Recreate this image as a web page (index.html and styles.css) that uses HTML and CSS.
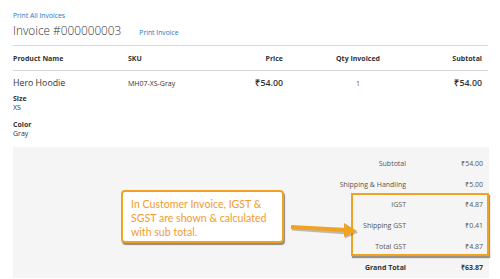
FILE: index.html
```html
<!DOCTYPE html>
<html lang="en">
<head>
  <meta charset="UTF-8" />
  <title>Invoice #000000003</title>
  <link rel="stylesheet" href="styles.css">
</head>
<body>
  <div class="page">
    <a class="link all-link" href="#">Print All Invoices</a>
    <div class="title-row">
      <h1 class="title">Invoice #000000003</h1>
      <a class="link" href="#">Print Invoice</a>
    </div>

    <div class="items">
      <div class="row head">
        <div>Product Name</div>
        <div>SKU</div>
        <div class="r">Price</div>
        <div class="c">Qty Invoiced</div>
        <div class="r">Subtotal</div>
      </div>
      <div class="row item">
        <div>
          <div class="name">Hero Hoodie</div>
          <dl class="opts">
            <dt>Size</dt>
            <dd>XS</dd>
            <dt>Color</dt>
            <dd>Gray</dd>
          </dl>
        </div>
        <div class="sku">MH07-XS-Gray</div>
        <div class="r price">₹54.00</div>
        <div class="c qty">1</div>
        <div class="r price">₹54.00</div>
      </div>
    </div>

    <div class="totals">
      <div class="trow"><span>Subtotal</span><span>₹54.00</span></div>
      <div class="trow"><span>Shipping &amp; Handling</span><span>₹5.00</span></div>
      <div class="trow"><span>IGST</span><span>₹4.87</span></div>
      <div class="trow"><span>Shipping GST</span><span>₹0.41</span></div>
      <div class="trow"><span>Total GST</span><span>₹4.87</span></div>
      <div class="trow grand"><span>Grand Total</span><span>₹63.87</span></div>

      <div class="gst-frame"></div>
      <div class="callout">In Customer Invoice, IGST &amp; SGST are shown &amp; calculated with sub total.</div>
      <svg class="arrow" width="70" height="20" viewBox="0 0 70 20">
        <line x1="0" y1="7" x2="56" y2="11" stroke="#5a4a30" stroke-width="4" opacity="0.35" transform="translate(1,1.5)"/>
        <polygon points="53,3 66,11 53,17" fill="#5a4a30" opacity="0.35" transform="translate(1,1.5)"/>
        <line x1="0" y1="7" x2="56" y2="10" stroke="#f0a222" stroke-width="4"/>
        <polygon points="53,3 66,11 53,17" fill="#f0a222"/>
      </svg>
    </div>
  </div>
</body>
</html>
```

FILE: styles.css
```css
body { margin: 0; font-family: "Open Sans", sans-serif; color: #333; background: #fff; }
.page { padding: 10px 12px 0 13px; }
.link { color: #1979c3; text-decoration: none; font-size: 6.8px; }
.all-link { display: block; line-height: 11px; }
.title-row { display: flex; align-items: baseline; gap: 18px; padding-bottom: 6px; border-bottom: 1px solid #d6d6d6; }
.title { margin: 0; font-weight: 300; font-size: 11.8px; line-height: 18px; color: #333; }

.row { display: grid; grid-template-columns: 115px 100px 55px 150px 49px 5px; font-size: 7px; }
.row::after { content: ""; }
.r { text-align: right; }
.c { text-align: center; }
.head { font-weight: 700; padding: 8px 0 7px; border-bottom: 1px solid #d6d6d6; }
.item { padding-top: 6px; }
.name { font-size: 8.8px; line-height: 13px; }
.sku { padding-top: 2px; }
.price { font-size: 8.8px; line-height: 13px; font-weight: 600; }
.qty { padding-top: 2px; color: #555; }
.opts { margin: 4px 0 0; line-height: 9px; }
.opts dt { font-weight: 700; }
.opts dd { margin: 0 0 8px; }

.totals { position: relative; margin-top: 1px; margin-right: -1px; background: #f5f5f5; padding: 7px 0 0; font-size: 7px; }
.trow { display: grid; grid-template-columns: 1fr 77px; padding-right: 6px; line-height: 20.7px; color: #555; }
.trow span { text-align: right; }
.grand { font-weight: 700; color: #333; }

.gst-frame { position: absolute; left: 338px; top: 46px; width: 134px; height: 59px; border: 2px solid #f0a222; box-shadow: 1px 2px 1px rgba(60,50,30,0.5); }
.callout { position: absolute; left: 108px; top: 43px; width: 151px; height: 43px; padding: 6px 0 0 8px; background: #fff; border: 2px solid #f0a222; border-radius: 4px; box-shadow: 1px 2px 1px rgba(60,50,30,0.55); color: #f39a2f; font-family: Lato, sans-serif; font-size: 10.6px; line-height: 13.8px; }
.arrow { position: absolute; left: 278px; top: 73px; }
```
